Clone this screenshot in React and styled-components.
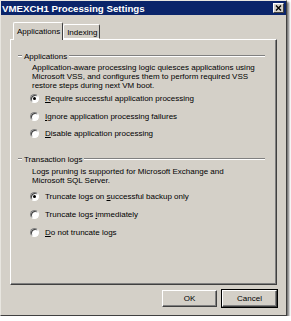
import React, { useState } from 'react';
import styled, { createGlobalStyle } from 'styled-components';

const GlobalStyle = createGlobalStyle`
  html, body {
    margin: 0;
    padding: 0;
    background: #ffffff;
  }
  body {
    font-family: "Liberation Sans", Arial, sans-serif;
    font-size: 8px;
    color: #000;
  }
`;

const Window = styled.div`
  width: 287px;
  height: 316px;
  box-sizing: border-box;
  background: #d4d0c8;
  border: 1px solid;
  border-color: #e8e6e0 #404040 #404040 #e8e6e0;
  box-shadow: 2px 2px 2px rgba(0, 0, 0, 0.55);
  display: flex;
  flex-direction: column;
`;

const TitleBar = styled.div`
  height: 14px;
  background: #0a246a;
  display: flex;
  align-items: center;
  justify-content: space-between;
  padding: 0 2px 0 1px;
  color: #fff;
  font-weight: bold;
  font-size: 9.7px;
`;

const CloseBtn = styled.div`
  width: 11px;
  height: 10px;
  box-sizing: border-box;
  background: #d4d0c8;
  border: 1px solid;
  border-color: #fff #404040 #404040 #fff;
  display: flex;
  align-items: center;
  justify-content: center;
`;

const Body = styled.div`
  flex: 1;
  display: flex;
  flex-direction: column;
  padding: 7px 9px 0 9px;
`;

const TabStrip = styled.div`
  display: flex;
  align-items: flex-end;
  height: 17px;
  padding-left: 3px;
  position: relative;
  z-index: 1;
`;

const Tab = styled.div`
  box-sizing: border-box;
  height: ${p => (p.$active ? '18px' : '15px')};
  margin-bottom: ${p => (p.$active ? '-1px' : '0')};
  padding: ${p => (p.$active ? '4px 2px 0 3px' : '3px 2px 0 3px')};
  background: #d4d0c8;
  border: 1px solid;
  border-bottom: ${p => (p.$active ? 'none' : '1px solid #fff')};
  border-color: #fff #404040 #fff #fff;
  border-radius: 2px 2px 0 0;
  font-size: 8px;
`;

const Panel = styled.div`
  height: 246px;
  box-sizing: border-box;
  border: 1px solid;
  border-color: #fff #404040 #404040 #fff;
  box-shadow: inset -1px -1px 0 #808080;
  padding: 11px 11px 0 7px;
  display: flex;
  flex-direction: column;
`;

const Group = styled.div`
  display: flex;
  flex-direction: column;
  margin-bottom: ${p => p.$gap || 0}px;
`;

const Legend = styled.div`
  display: flex;
  align-items: center;
  gap: 2px;
  height: 10px;

  &::before,
  &::after {
    content: '';
    height: 0;
    border-top: 1px solid #808080;
    border-bottom: 1px solid #fff;
  }
  &::before {
    width: 4px;
  }
  &::after {
    flex: 1;
  }
`;

const Desc = styled.div`
  padding-left: 14px;
  margin-top: ${p => p.$top || 2}px;
  line-height: 9px;
  white-space: nowrap;
`;

const Options = styled.div`
  display: flex;
  flex-direction: column;
  gap: 8.7px;
  padding-left: 12px;
  margin-top: ${p => p.$top || 4}px;
`;

const Option = styled.label`
  display: flex;
  align-items: center;
  gap: 6px;
  height: 9px;

  u {
    text-decoration: underline;
  }
`;

const RadioBox = styled.span`
  width: 9px;
  height: 9px;
  flex: 0 0 9px;
  box-sizing: border-box;
  border-radius: 50%;
  background: #fff;
  border: 1px solid;
  border-color: #808080 #fff #fff #808080;
  box-shadow: inset 1px 1px 0 #404040;
  display: flex;
  align-items: center;
  justify-content: center;

  &::after {
    content: '';
    width: 3px;
    height: 3px;
    border-radius: 50%;
    background: ${p => (p.$on ? '#000' : 'transparent')};
  }
`;

const Footer = styled.div`
  display: flex;
  justify-content: flex-end;
  gap: 5px;
  padding: 5px 0 0 0;
`;

const Button = styled.button`
  width: 55px;
  height: 17px;
  box-sizing: border-box;
  background: #d4d0c8;
  font-family: "Liberation Sans", Arial, sans-serif;
  font-size: 8px;
  color: #000;
  padding: 0;
  border: 1px solid;
  border-color: #fff #404040 #404040 #fff;
  box-shadow: ${p => (p.$default ? '0 0 0 1px #000, inset -1px -1px 0 #808080' : 'inset -1px -1px 0 #808080')};
`;

function Radio({ checked, onClick, children }) {
  return (
    <Option onClick={onClick}>
      <RadioBox $on={checked} />
      <span>{children}</span>
    </Option>
  );
}

export default function App() {
  const [appMode, setAppMode] = useState('require');
  const [logMode, setLogMode] = useState('success');

  return (
    <>
      <GlobalStyle />
      <Window>
        <TitleBar>
          <span>VMEXCH1 Processing Settings</span>
          <CloseBtn>
            <svg width="7" height="6" viewBox="0 0 7 6">
              <path d="M1 0.5 L6 5.5 M6 0.5 L1 5.5" stroke="#000" strokeWidth="1.4" />
            </svg>
          </CloseBtn>
        </TitleBar>
        <Body>
          <TabStrip>
            <Tab $active>Applications</Tab>
            <Tab>Indexing</Tab>
          </TabStrip>
          <Panel>
            <Group $gap={16}>
              <Legend>Applications</Legend>
              <Desc>
                Application-aware processing logic quiesces applications using
                <br />
                Microsoft VSS, and configures them to perform required VSS
                <br />
                restore steps during next VM boot.
              </Desc>
              <Options $top={4}>
                <Radio checked={appMode === 'require'} onClick={() => setAppMode('require')}>
                  <u>R</u>equire successful application processing
                </Radio>
                <Radio checked={appMode === 'ignore'} onClick={() => setAppMode('ignore')}>
                  <u>I</u>gnore application processing failures
                </Radio>
                <Radio checked={appMode === 'disable'} onClick={() => setAppMode('disable')}>
                  <u>D</u>isable application processing
                </Radio>
              </Options>
            </Group>
            <Group>
              <Legend>Transaction logs</Legend>
              <Desc $top={3}>
                Logs pruning is supported for Microsoft Exchange and
                <br />
                Microsoft SQL Server.
              </Desc>
              <Options $top={7}>
                <Radio checked={logMode === 'success'} onClick={() => setLogMode('success')}>
                  Truncate logs on <u>s</u>uccessful backup only
                </Radio>
                <Radio checked={logMode === 'now'} onClick={() => setLogMode('now')}>
                  Truncate logs <u>i</u>mmediately
                </Radio>
                <Radio checked={logMode === 'never'} onClick={() => setLogMode('never')}>
                  <u>D</u>o not truncate logs
                </Radio>
              </Options>
            </Group>
          </Panel>
          <Footer>
            <Button>OK</Button>
            <Button $default>Cancel</Button>
          </Footer>
        </Body>
      </Window>
    </>
  );
}
